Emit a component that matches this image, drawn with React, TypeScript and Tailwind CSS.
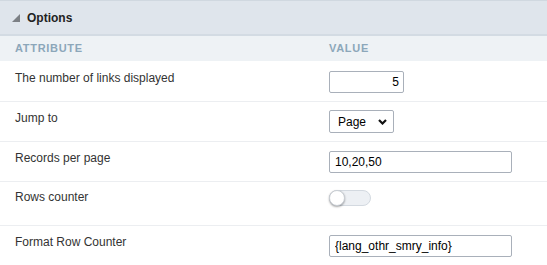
import { useState } from 'react';

const font = { fontFamily: '"Liberation Sans", Arial, sans-serif' };

function Toggle({ on, onChange }: { on: boolean; onChange: (v: boolean) => void }) {
  return (
    <button
      type="button"
      onClick={() => onChange(!on)}
      className="relative w-[42px] h-[16px] rounded-full bg-[#edf0f4] border border-[#d3d9e0]"
    >
      <span
        className={
          'absolute top-[-1px] w-[16px] h-[16px] rounded-full bg-white border border-[#c9ced4] shadow-[0_1px_2px_rgba(0,0,0,0.35)] ' +
          (on ? 'left-[24px]' : 'left-[-1px]')
        }
      />
    </button>
  );
}

export default function App() {
  const [links, setLinks] = useState('5');
  const [jump, setJump] = useState('Page');
  const [records, setRecords] = useState('10,20,50');
  const [counter, setCounter] = useState(false);
  const [format, setFormat] = useState('{lang_othr_smry_info}');

  const inputCls =
    'h-[22px] border border-[#a9b0ba] rounded-[2px] px-[5px] text-[12px] text-black outline-none bg-white';

  return (
    <div className="w-[547px] h-[265px] overflow-hidden bg-white text-[12px] text-[#333]" style={font}>
      {/* panel header */}
      <div className="h-[36px] bg-[#dfe5ec] border-t border-[#d0d8e0] border-b-2 border-b-[#d3dbe3] flex items-center pl-[12px]">
        <svg width="8" height="8" viewBox="0 0 8 8" className="mr-[7px] mt-[1px]">
          <polygon points="8,0 8,8 0,8" fill="#7c8085" />
        </svg>
        <span className="font-bold text-[12px] text-[#222]">Options</span>
      </div>

      {/* column titles */}
      <div className="h-[25px] bg-[#eef2f5] flex items-center px-[15px] text-[11px] font-bold tracking-[0.7px] text-[#8ca7ba]">
        <div className="w-[314px]">ATTRIBUTE</div>
        <div>VALUE</div>
      </div>

      {/* rows */}
      <div className="flex h-[41px] pt-[10px] px-[15px] border-b border-[#eceef1]">
        <div className="w-[314px] leading-[14px]">The number of links displayed</div>
        <input
          value={links}
          onChange={(e) => setLinks(e.target.value)}
          className={inputCls + ' w-[75px] text-right pr-[4px]'}
          style={font}
        />
      </div>

      <div className="flex h-[40px] pt-[8px] px-[15px] border-b border-[#eceef1]">
        <div className="w-[314px] leading-[14px] pt-[1px]">Jump to</div>
        <div className="relative w-[65px] h-[23px]">
          <select
            value={jump}
            onChange={(e) => setJump(e.target.value)}
            className="appearance-none w-full h-full border border-[#a9b0ba] rounded-[2px] pl-[8px] text-[12px] text-black bg-white outline-none"
            style={font}
          >
            <option>Page</option>
            <option>Line</option>
          </select>
          <svg
            width="9"
            height="6"
            viewBox="0 0 9 6"
            className="absolute right-[7px] top-[9px] pointer-events-none"
          >
            <path d="M1 1 L4.5 4.5 L8 1" stroke="#111" strokeWidth="2.2" fill="none" />
          </svg>
        </div>
      </div>

      <div className="flex h-[40px] pt-[9px] px-[15px] border-b border-[#eceef1]">
        <div className="w-[314px] leading-[14px]">Records per page</div>
        <input
          value={records}
          onChange={(e) => setRecords(e.target.value)}
          className={inputCls + ' w-[183px]'}
          style={font}
        />
      </div>

      <div className="flex h-[44px] pt-[8px] px-[15px] border-b border-[#eceef1]">
        <div className="w-[314px] leading-[14px]">Rows counter</div>
        <Toggle on={counter} onChange={setCounter} />
      </div>

      <div className="flex pt-[9px] px-[15px]">
        <div className="w-[314px] leading-[14px]">Format Row Counter</div>
        <input
          value={format}
          onChange={(e) => setFormat(e.target.value)}
          className={inputCls + ' w-[183px]'}
          style={font}
        />
      </div>
    </div>
  );
}
